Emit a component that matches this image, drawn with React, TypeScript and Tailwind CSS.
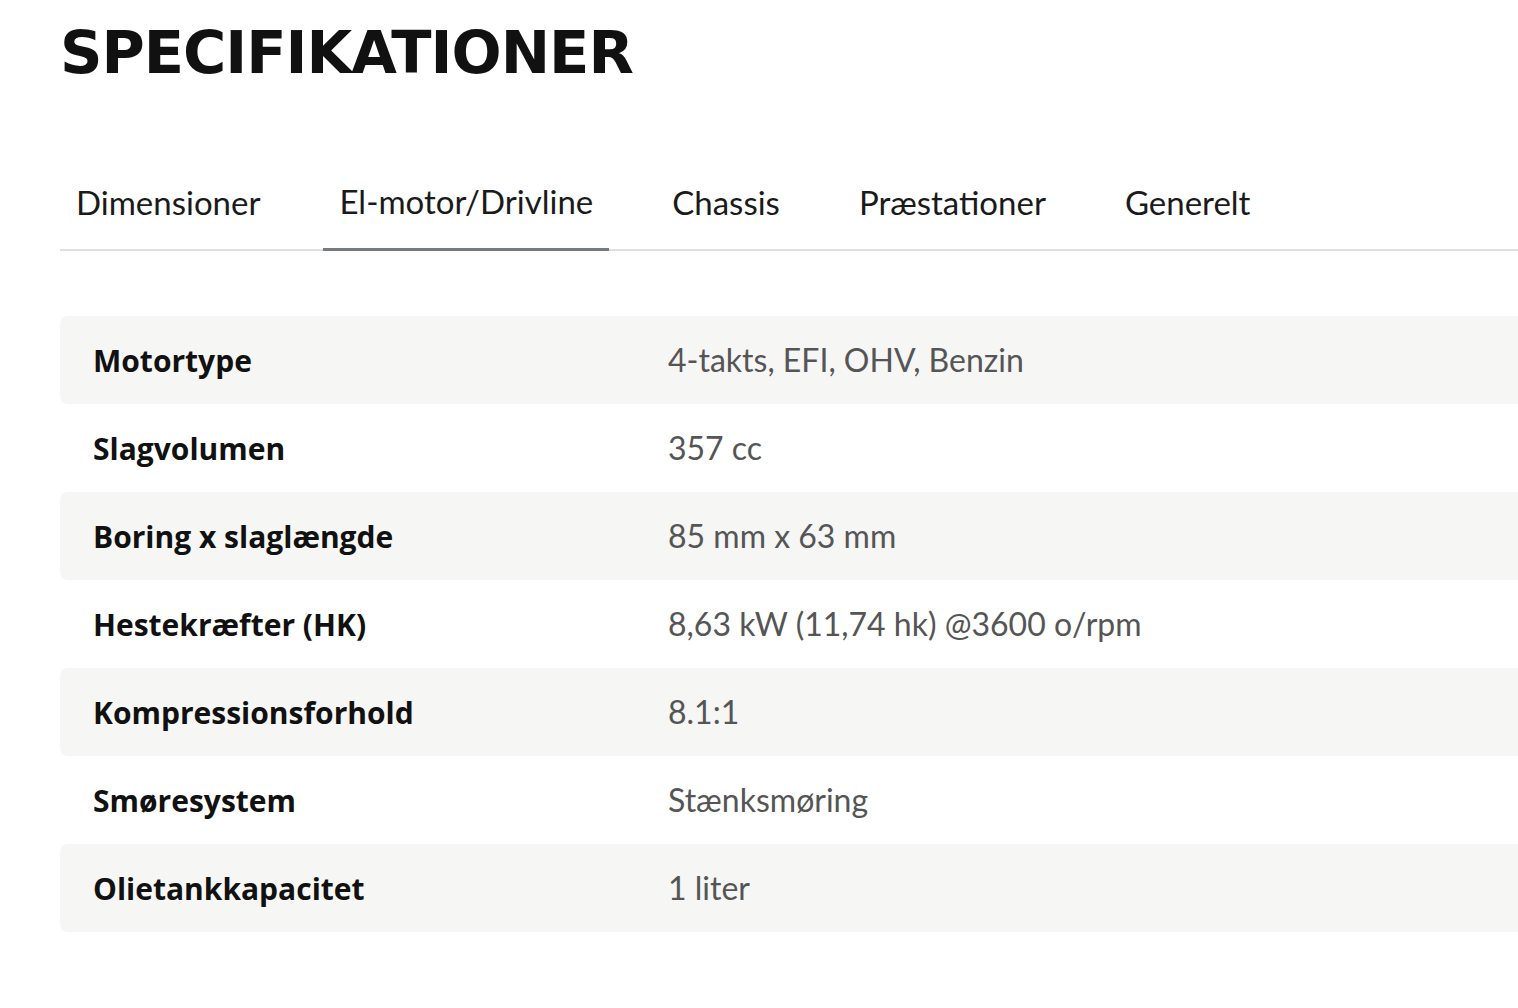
import { useState } from "react"

const tabs = ["Dimensioner", "El-motor/Drivline", "Chassis", "Præstationer", "Generelt"]

const specs: [string, string][] = [
  ["Motortype", "4-takts, EFI, OHV, Benzin"],
  ["Slagvolumen", "357 cc"],
  ["Boring x slaglængde", "85 mm x 63 mm"],
  ["Hestekræfter (HK)", "8,63 kW (11,74 hk) @3600 o/rpm"],
  ["Kompressionsforhold", "8.1:1"],
  ["Smøresystem", "Stænksmøring"],
  ["Olietankkapacitet", "1 liter"],
]

export default function App() {
  const [active, setActive] = useState(1)

  return (
    <div className="min-h-screen bg-white pl-[60px] pt-[23px] font-['Lato',sans-serif]">
      <h1 className="font-['DejaVu_Sans',sans-serif] text-[59px] font-bold leading-none tracking-[-1px] text-[#111111]">
        SPECIFIKATIONER
      </h1>

      <div className="mt-[78px] flex gap-[47px] border-b-2 border-[#dedede]">
        {tabs.map((t, i) => (
          <button
            key={t}
            onClick={() => setActive(i)}
            className={
              i === active
                ? "-mb-[2px] flex h-[91px] items-center border-b-[3px] border-[#757982] px-4 pb-[4px] text-[33px] text-[#1a1a1a]"
                : "flex h-[89px] items-center px-4 pb-[4px] text-[33px] text-[#1a1a1a]"
            }
          >
            {t}
          </button>
        ))}
      </div>

      <div className="mt-[65px] flex flex-col">
        {specs.map(([label, value], i) => (
          <div
            key={label}
            className={
              i % 2 === 0
                ? "flex h-[88px] items-center rounded-l-lg bg-[#f6f6f5] pl-[33px]"
                : "flex h-[88px] items-center pl-[33px]"
            }
          >
            <div className="w-[575px] font-['Open_Sans',sans-serif] text-[30px] font-bold text-[#111111]">
              {label}
            </div>
            <div className="text-[32px] text-[#555555]">{value}</div>
          </div>
        ))}
      </div>
    </div>
  )
}
